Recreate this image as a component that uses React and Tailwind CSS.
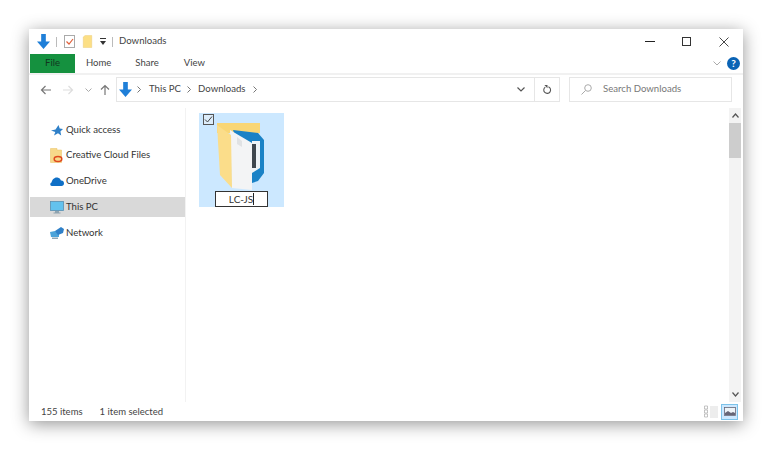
import React from "react";

const DownloadArrow = ({ className }) => (
  <svg className={className} viewBox="0 0 14 16">
    <path d="M4.500 0h5v8H14l-7 8-7-8h4.500z" fill="#1f7fd8" />
  </svg>
);

const Folder = ({ className }) => (
  <svg className={className} viewBox="0 0 12 17">
    <path d="M0.500 2.500 3 0.500h8.500v16h-11z" fill="#fcdf85" stroke="#e8c86e" strokeWidth="0.6" />
  </svg>
);

const Chevron = () => (
  <svg className="w-[4px] h-[7px]" viewBox="0 0 4 7">
    <path d="M0.500 0.500 3.500 3.500l-3 3" fill="none" stroke="#666" strokeWidth="0.9" />
  </svg>
);

function NavItem({ icon, label, active }) {
  return (
    <div className={`h-[20px] mb-[5.7px] flex items-center pl-[19px] gap-[2px] ${active ? "bg-[#d9d9d9]" : ""}`}>
      <div className="w-[15px] h-[15px] flex items-center justify-center shrink-0">{icon}</div>
      <span className="text-[9.6px] text-[#333] whitespace-nowrap">{label}</span>
    </div>
  );
}

export default function App() {
  return (
    <div className="w-[768px] h-[450px] bg-white pt-[29px] pl-[29px] overflow-hidden font-['Lato',sans-serif]">
      <div className="w-[714px] h-[392px] bg-white flex flex-col shadow-[0_3px_16px_rgba(0,0,0,0.42)]">
        {/* title bar */}
        <div className="h-[25px] shrink-0 flex items-center pl-[8px] relative">
          <DownloadArrow className="w-[13px] h-[15px]" />
          <div className="w-px h-[10px] bg-[#bbb] ml-[6px]" />
          <svg className="w-[11px] h-[13px] ml-[7px]" viewBox="0 0 11 13">
            <rect x="0.500" y="0.500" width="10" height="12" fill="#fff" stroke="#aaa" />
            <path d="M2.500 6.500 5 9l4-5" fill="none" stroke="#e0603a" strokeWidth="1.2" />
          </svg>
          <Folder className="w-[11px] h-[13px] ml-[7px]" />
          <svg className="w-[6px] h-[7px] ml-[7px]" viewBox="0 0 6 7">
            <rect x="0" y="0" width="6" height="1" fill="#333" />
            <path d="M0 3h6L3 7z" fill="#333" />
          </svg>
          <div className="w-px h-[10px] bg-[#bbb] ml-[6px]" />
          <span className="text-[9.600px] text-[#444] ml-[6px]">Downloads</span>
          <div className="ml-auto flex items-center pr-[14px]">
            <div className="w-[10px] h-px bg-[#222] mr-[27px]" />
            <div className="w-[9px] h-[9px] border border-[#333] mr-[28px]" />
            <svg className="w-[10px] h-[10px]" viewBox="0 0 10 10">
              <path d="M0.500 0.500l9 9M9.500 0.500l-9 9" stroke="#333" strokeWidth="0.9" />
            </svg>
          </div>
        </div>

        {/* ribbon tabs */}
        <div className="h-[19px] shrink-0 flex items-center pl-px pr-[3px]">
          <div className="w-[45px] h-full bg-[#15913f] flex items-center justify-center text-[9.500px] text-[#12351f]">File</div>
          <span className="text-[9.500px] text-[#444] ml-[11px]">Home</span>
          <span className="text-[9.500px] text-[#444] ml-[24px]">Share</span>
          <span className="text-[9.500px] text-[#444] ml-[25px]">View</span>
          <svg className="w-[8px] h-[5px] ml-auto mr-[6px]" viewBox="0 0 8 5">
            <path d="M0.500 0.500 4 4l3.500-3.500" fill="none" stroke="#aaa" />
          </svg>
          <div className="w-[13px] h-[13px] rounded-full bg-[#0a63b5] text-white text-[10px] font-bold flex items-center justify-center">?</div>
        </div>
        <div className="h-[2px] shrink-0 bg-[#f1f1f1]" />

        {/* address row */}
        <div className="h-[25px] mt-[2px] shrink-0 flex items-stretch pl-[11px]">
          <div className="w-[76px] flex items-center">
            <svg className="w-[11px] h-[10px]" viewBox="0 0 11 10">
              <path d="M11 5H1.500M5.500 1 1.500 5l4 4" fill="none" stroke="#777" strokeWidth="1.2" />
            </svg>
            <svg className="w-[11px] h-[10px] ml-[12px]" viewBox="0 0 11 10">
              <path d="M0 5h9.500M5.500 1l4 4-4 4" fill="none" stroke="#ddd" strokeWidth="1.2" />
            </svg>
            <svg className="w-[7px] h-[4px] ml-[11px]" viewBox="0 0 7 4">
              <path d="M0.500 0.500 3.500 3.500l3-3" fill="none" stroke="#aaa" />
            </svg>
            <svg className="w-[10px] h-[11px] ml-[8px]" viewBox="0 0 10 11">
              <path d="M5 11V1.500M1 5.500l4-4 4 4" fill="none" stroke="#777" strokeWidth="1.2" />
            </svg>
          </div>
          <div className="w-[444px] border border-[#e6e6e6] flex items-center pl-[2px]">
            <DownloadArrow className="w-[13px] h-[15px]" />
            <span className="ml-[5px] mr-[8px]"><Chevron /></span>
            <span className="text-[9.600px] text-[#444]">This PC</span>
            <span className="ml-[6px] mr-[7px]"><Chevron /></span>
            <span className="text-[9.600px] text-[#444]">Downloads</span>
            <span className="ml-[7px]"><Chevron /></span>
            <svg className="w-[8px] h-[5px] ml-auto mr-[9px]" viewBox="0 0 8 5">
              <path d="M0.500 0.500 4 4l3.500-3.500" fill="none" stroke="#555" strokeWidth="1.2" />
            </svg>
            <div className="w-[25px] h-full border-l border-[#e6e6e6] flex items-center justify-center">
              <svg className="w-[9px] h-[11px]" viewBox="0 0 10 11">
                <path d="M6 2.500a3.800 3.800 0 1 1-3.500.4" fill="none" stroke="#555" strokeWidth="1.2" />
                <path d="M1.500 0.500h3.500v3.500z" fill="#555" />
              </svg>
            </div>
          </div>
          <div className="w-[163px] ml-[9px] border border-[#e6e6e6] flex items-center pl-[11px]">
            <svg className="w-[11px] h-[11px]" viewBox="0 0 11 11">
              <circle cx="7" cy="4" r="3.300" fill="none" stroke="#aaa" />
              <path d="M4.500 6.500 0.500 10.500" stroke="#aaa" />
            </svg>
            <span className="text-[9.600px] text-[#777] ml-[11px]">Search Downloads</span>
          </div>
        </div>

        {/* main area */}
        <div className="flex-1 flex min-h-0 pt-[6px]">
          <div className="w-[157px] shrink-0 border-r border-[#f2f2f2] pt-[12px] pl-px">
            <NavItem
              label="Quick access"
              icon={
                <svg className="w-[12px] h-[11px]" viewBox="0 0 12 11">
                  <path d="M7.500 0l1.200 3.600 3.300.4-2.600 2.500.8 4-3.200-2.300L3 10.500l1.300-3.600L0 5.500l4.500-.9z" fill="#2f80c8" />
                </svg>
              }
            />
            <NavItem
              label="Creative Cloud Files"
              icon={
                <svg className="w-[13px] h-[15px]" viewBox="0 0 13 15">
                  <path d="M0.500 0.500h6.500v1.500h4.500v12.500h-11z" fill="#f7d98a" stroke="#e8c060" strokeWidth="0.5" />
                  <ellipse cx="8" cy="11" rx="3.800" ry="2.500" fill="none" stroke="#e04a1f" strokeWidth="1.500" />
                </svg>
              }
            />
            <NavItem
              label="OneDrive"
              icon={
                <svg className="w-[14px] h-[9px]" viewBox="0 0 14 9">
                  <path d="M1.800 9C0 9-.4 6.300 1.500 5.600 2 2.500 4.500 0 7.500 0.500c1.800.3 3 1.500 3.400 3 2-.2 3.100 1.200 3.100 2.700C14 8 13 9 11.500 9z" fill="#0f6fc6" />
                </svg>
              }
            />
            <NavItem
              active
              label="This PC"
              icon={
                <svg className="w-[14px] h-[13px]" viewBox="0 0 14 13">
                  <rect x="0.500" y="0.500" width="13" height="9" fill="#63c2ee" stroke="#5a8fb0" strokeWidth="0.8" />
                  <path d="M5 10h4v1.500H5zM3.500 11.500h7v1h-7z" fill="#8fa3b0" />
                </svg>
              }
            />
            <NavItem
              label="Network"
              icon={
                <svg className="w-[14px] h-[12px]" viewBox="0 0 14 12">
                  <path d="M0 5l5-1 4 1v5H1z" fill="#4ba3d9" />
                  <path d="M5 4l6-4 3 2-1 4-5 2z" fill="#2f80c8" />
                  <path d="M2 10.500h6V12H2z" fill="#8fa6b5" />
                </svg>
              }
            />
          </div>

          {/* file area */}
          <div className="flex-1 pt-[5px] pl-[13px] min-w-0">
            <div className="w-[85px] h-[94px] bg-[#cce8ff] relative">
              <svg className="absolute left-0 top-0 w-[85px] h-[78px]" viewBox="0 0 85 78">
                <path d="M18 10h43v10H18z" fill="#f9d675" />
                <path d="M34 17l25 3 6 7v33l-6 8-6 2z" fill="#1a82c6" />
                <path d="M53 28h8v27l-8 5z" fill="#eef3f6" />
                <path d="M53 31h4v24h-4z" fill="#3f474e" />
                <path d="M31 17l22 13v47l-20-2z" fill="#f3f4f5" />
                <path d="M38 24l5 4v6l-5-3z" fill="#e0e2e4" />
                <path d="M18 12l14 10 1 53-12-13z" fill="#fbdd8a" />
              </svg>
              <div className="absolute left-[4px] top-[1px] w-[11px] h-[11px] bg-[#dcecf9] border border-[#555] flex items-center justify-center">
                <svg className="w-[9px] h-[9px]" viewBox="0 0 9 9">
                  <path d="M1 4.500 3.500 7 8 1.500" fill="none" stroke="#444" />
                </svg>
              </div>
              <div className="absolute left-[16px] top-[78px] w-[53px] h-[16px] bg-white border border-[#333] flex items-center justify-center">
                <span className="text-[10px] text-[#333] leading-none">LC-JS</span>
                <span className="w-px h-[12px] bg-[#222]" />
              </div>
            </div>
          </div>

          {/* scrollbar */}
          <div className="w-[12px] shrink-0 mr-[2px] bg-[#f3f3f3] flex flex-col items-center">
            <div className="h-[15px] flex items-center justify-center">
              <svg className="w-[7px] h-[5px]" viewBox="0 0 7 5">
                <path d="M0.500 4.500 3.500 1l3 3.500" fill="none" stroke="#555" strokeWidth="1.2" />
              </svg>
            </div>
            <div className="w-full h-[35px] bg-[#cdcdcd]" />
            <div className="mt-auto h-[15px] flex items-center justify-center">
              <svg className="w-[7px] h-[5px]" viewBox="0 0 7 5">
                <path d="M0.500 0.500 3.500 4l3-3.500" fill="none" stroke="#555" strokeWidth="1.2" />
              </svg>
            </div>
          </div>
        </div>

        {/* status bar */}
        <div className="h-[19px] shrink-0 flex items-center pl-[12px] pr-[5px]">
          <span className="text-[9.500px] text-[#444] pt-[2px]">155 items</span>
          <span className="text-[9.500px] text-[#444] ml-[17px] pt-[2px]">1 item selected</span>
          <svg className="w-[14px] h-[13px] ml-auto" viewBox="0 0 14 13">
            <path d="M0.500 1h3v3h-3zM0.500 5h3v3h-3zM0.500 9h3v3h-3z" fill="none" stroke="#aaa" strokeWidth="0.7" />
            <path d="M6 2h8M6 4h8M6 6h8M6 8h8M6 10h8M6 12h8" stroke="#ccc" strokeWidth="0.7" />
          </svg>
          <div className="w-[17px] h-[16px] ml-[3px] bg-[#cce8ff] border border-[#7cc3ea] flex items-center justify-center">
            <svg className="w-[12px] h-[9px]" viewBox="0 0 12 9">
              <rect x="0.500" y="0.500" width="11" height="8" fill="#eef4f8" stroke="#667" strokeWidth="0.8" />
              <path d="M1 6l3-2 3 2 2-1 2 1v2H1z" fill="#667" />
            </svg>
          </div>
        </div>
      </div>
    </div>
  );
}
